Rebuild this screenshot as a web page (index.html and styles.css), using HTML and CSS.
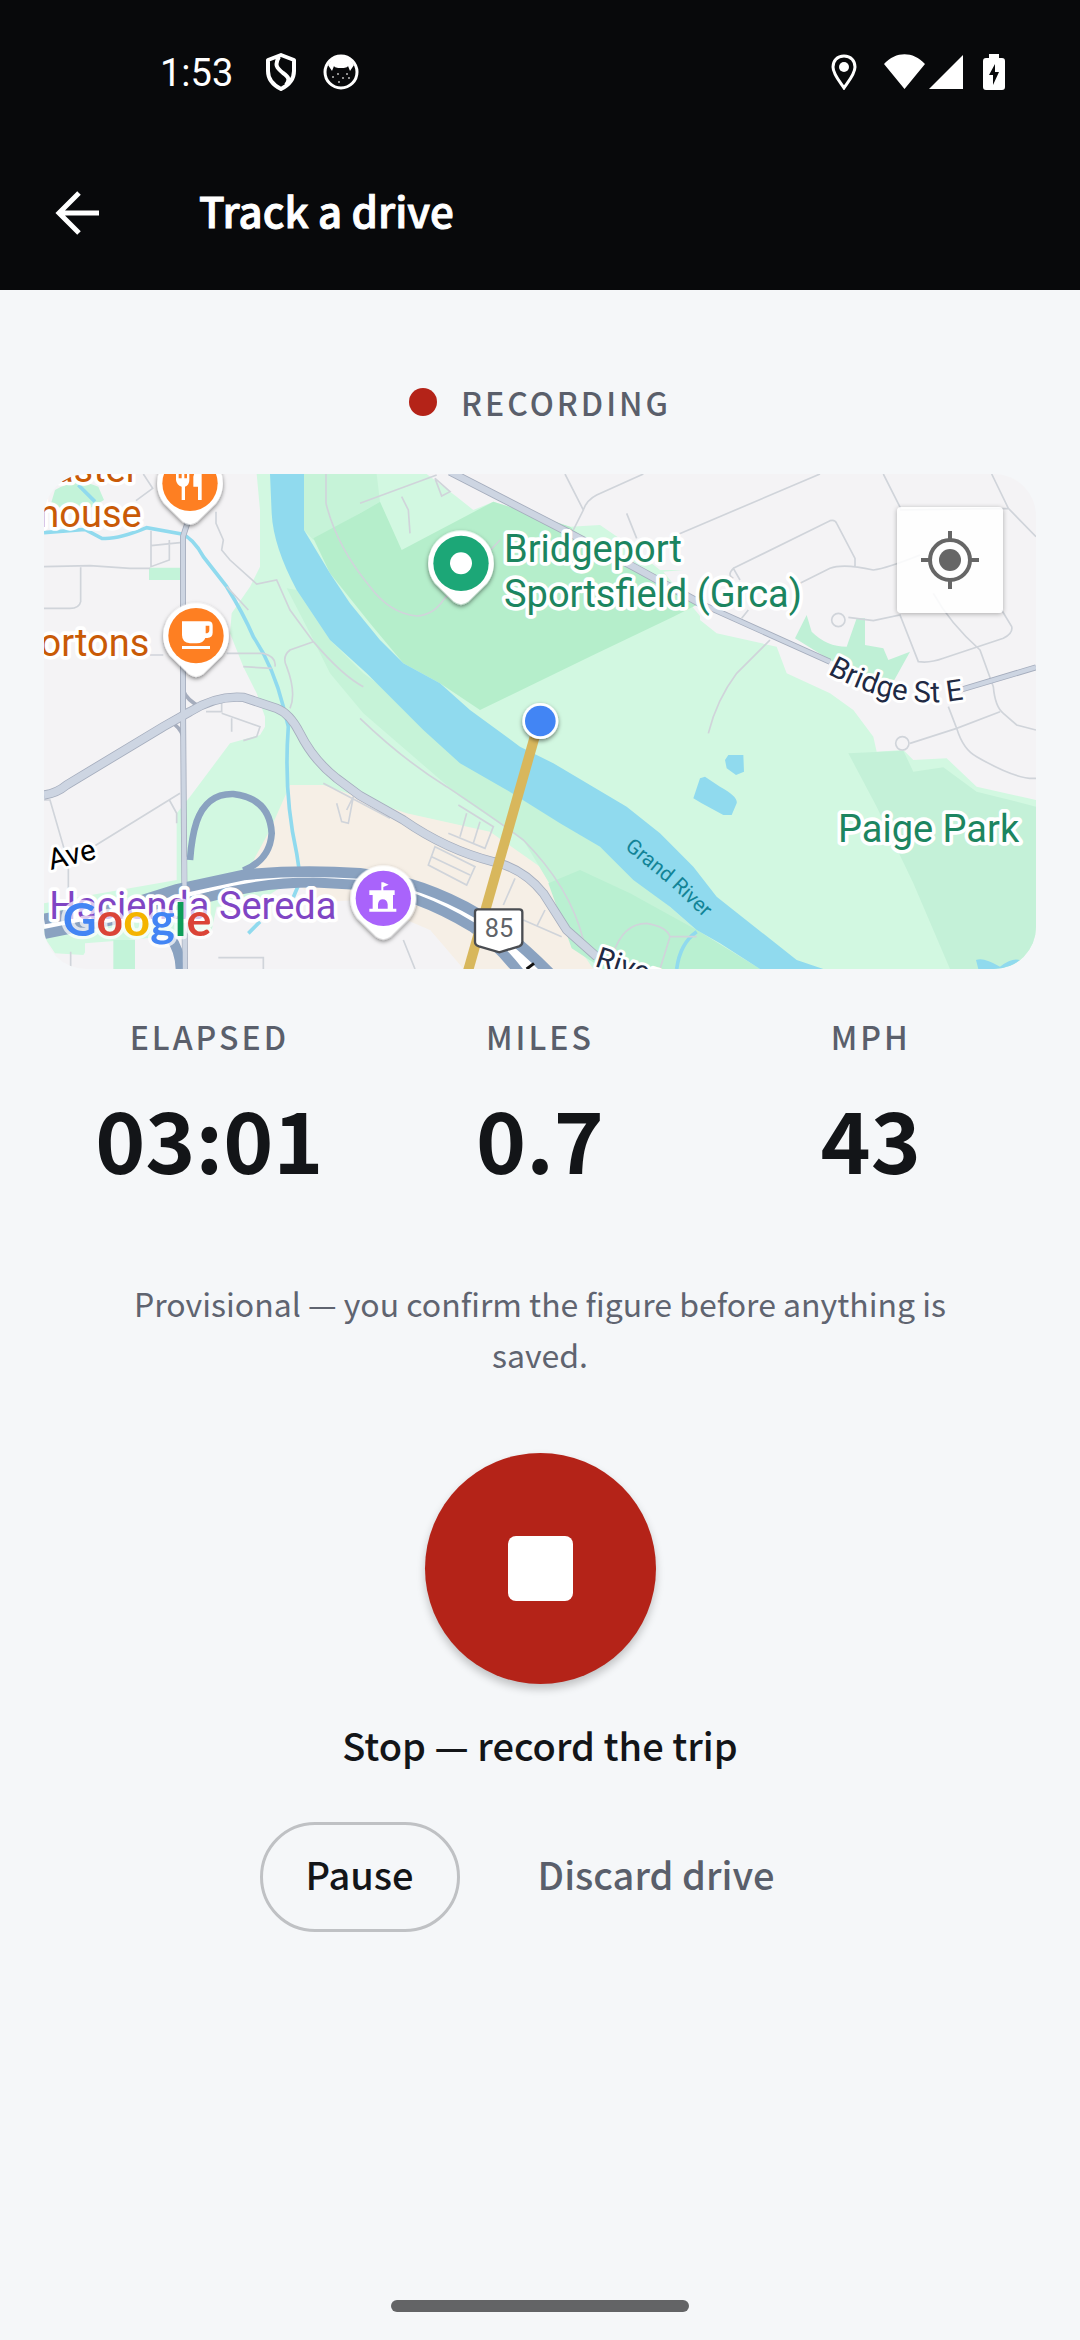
FILE: index.html
```html
<!DOCTYPE html>
<html lang="en">
<head>
<meta charset="utf-8">
<meta name="viewport" content="width=device-width, initial-scale=1">
<title>Track a drive</title>
<link rel="stylesheet" href="styles.css">
</head>
<body>
<header class="top">
  <div class="status">
    <div class="status-group">
      <span class="clock">1:53</span>
      <svg class="icon-shield" viewBox="0 0 32 38" aria-hidden="true"><path d="M16 2 L29 7 V18 C29 26 24 32 16 36 C8 32 3 26 3 18 V7 Z M14 4 C9 12 12 15 18 20 C24 24 25 27 21 32" fill="none" stroke="#fff" stroke-width="4" stroke-linejoin="round"/></svg>
      <svg class="icon-cat" viewBox="0 0 36 36" aria-hidden="true"><circle cx="18" cy="18" r="16" fill="none" stroke="#fff" stroke-width="3"/><path d="M5 11 C9 4 14 2 18 2 C22 2 27 4 31 11 L27 17 L25 12 C24 14 20 14 18 14 C16 14 12 14 11 12 L9 17 Z" fill="#fff"/><g fill="#bbb"><circle cx="10" cy="23" r="1"/><circle cx="20" cy="24" r="1"/><circle cx="15" cy="20" r="1"/><circle cx="24" cy="20" r="1"/><circle cx="16" cy="28" r="1"/><circle cx="26" cy="24" r="1"/></g></svg>
    </div>
    <div class="status-group status-right">
      <svg class="icon-place" viewBox="0 0 26 36" aria-hidden="true"><path d="M13 2 C6 2 2 7 2 13 C2 20 9 28 13 34 C17 28 24 20 24 13 C24 7 20 2 13 2 Z" fill="none" stroke="#fff" stroke-width="3"/><circle cx="13" cy="13" r="5" fill="#fff"/></svg>
      <svg class="icon-signal" viewBox="0 0 80 36" aria-hidden="true"><path d="M0 10 C12 -3 29 -3 41 10 L20.500 35 Z M79 1 V35 H45 Z" fill="#fff"/></svg>
      <svg class="icon-battery" viewBox="0 0 22 36" aria-hidden="true"><path fill="#fff" d="M6 0 H16 V4 H19 Q22 4 22 7 V33 Q22 36 19 36 H3 Q0 36 0 33 V7 Q0 4 3 4 H6 Z"/><path d="M12 10 L6 21 H10 V31 L16 18 H12 Z" fill="#08090b"/></svg>
    </div>
  </div>
  <div class="appbar">
    <button class="back" type="button" aria-label="Back"><svg viewBox="0 0 44 44" aria-hidden="true"><path d="M24 2 L4 22 L24 42 M4 22 H44" fill="none" stroke="#fff" stroke-width="5"/></svg></button>
    <h1 class="title">Track a drive</h1>
  </div>
</header>

<main class="content">
  <p class="recording label"><span class="dot"></span>Recording</p>

  <section class="map" aria-label="Map">
    <svg class="map-art" viewBox="42 42 2976 1485" preserveAspectRatio="xMidYMid slice" role="img" aria-label="Map of the drive">
      <defs>
        <path id="pin" d="M0 -98 A98 98 0 0 1 78 60 L22 115 Q0 132 -22 115 L-78 60 A98 98 0 0 1 0 -98 Z"/>
        <path id="bridge-line" d="M2392 640 Q2620 770 2850 706"/>
        <path id="river-line" d="M1783 1165 L1920 1276 L2060 1410"/>
        <filter id="pin-shadow" x="-30%" y="-30%" width="160%" height="160%"><feDropShadow dx="0" dy="6" stdDeviation="7" flood-color="#000" flood-opacity=".5"/></filter>
      </defs>
      <rect x="42" y="42" width="2976" height="1485" fill="#f4f3f5"/>

      <!-- parks and built-up areas -->
      <path fill="#d2f8e1" d="M680 42 L690 150 V320 L660 380 L605 460 L600 520 L640 620 L680 700 L705 770 L705 800 L690 825 L600 850 L480 1010 L440 1060 V1260 L42 1330 V1430 L75 1480 L160 1485 L180 1455 L560 1410 L800 1250 L1700 1527 H3018 V1020 L2840 980 L2750 895 L2650 900 L2620 870 L2540 875 L2530 830 L2470 750 L2400 700 L2270 640 L2240 560 L2060 520 L2010 480 L2010 330 H1890 L1790 250 L1710 195 L1620 200 L1390 125 L1330 150 L1280 110 L1190 42 Z"/>
      <path fill="#f4f3f5" d="M1900 335 L2020 325 V480 Z"/>
      <path fill="#f6efe6" d="M780 975 L880 975 L1130 1060 L1380 1115 L1530 1220 L1570 1290 L1630 1440 L1690 1527 H1300 L1200 1410 L1000 1435 L800 1270 L660 1220 L720 1110 Z"/>
      <path fill="#f4f3f5" d="M560 1340 L990 1320 L1200 1410 L1300 1527 H520 Z M165 1450 L420 1430 V1527 H165 Z"/>
      <path fill="#c3f3d9" d="M250 1440 H315 V1527 H250 Z M75 90 Q140 50 205 80 L222 120 L170 150 L60 140 Z M357 323 H452 V360 H357 Z"/>
      <path fill="#c6f3d8" d="M822 42 H1040 L1050 125 L850 240 L822 210 Z M770 385 L800 390 L900 540 L1000 640 L1180 770 L1430 990 L1710 1160 L2000 1410 L2190 1527 H1720 L1630 1440 L1570 1290 L1480 1140 L1290 1010 L1000 760 L900 640 L840 520 Z"/>
      <path fill="#b9f0d1" d="M1555 1270 L1650 1230 L1800 1300 L2000 1410 L2190 1527 H1720 L1625 1465 Z"/>
      <path fill="#b5eecb" d="M1390 125 L1115 270 L1050 125 L990 160 L850 235 L900 340 L1020 490 L1120 610 L1230 670 L1350 750 L1690 585 L1930 470 L2010 430 L1890 360 L1710 280 L1620 200 Z"/>
      <path fill="#c4f1d8" d="M2455 880 L2620 872 L2650 935 L2740 922 L2840 995 L3018 1040 V1527 H2760 L2650 1270 L2540 1040 Z"/>
      <path fill="#bff0d6" d="M2295 535 L2330 465 L2345 515 Q2390 560 2450 560 L2480 475 L2505 475 L2505 555 L2560 565 L2575 600 L2640 575 L2590 665 L2500 650 L2400 600 Z"/>

      <!-- water -->
      <path fill="#90daee" d="M720 42 L725 160 Q730 260 800 390 L900 540 L1010 640 L1180 810 L1290 910 L1430 990 L1590 1090 L1710 1160 L1810 1260 L1920 1340 L2000 1410 L2070 1450 L2190 1527 H2380 L2300 1500 L2060 1310 L1990 1220 L1890 1120 L1790 1040 L1570 910 L1470 860 L1320 750 L1230 670 L1120 610 L1050 540 L960 430 L900 340 L822 210 V42 Z M2085 900 L2095 885 H2140 L2142 935 L2118 945 L2090 925 Z M1990 1015 L2010 955 L2025 950 L2070 980 Q2125 1010 2120 1030 L2105 1065 H2080 L2015 1030 Z M2838 1500 Q2860 1490 2910 1520 Q2950 1490 2972 1502 L2930 1527 H2845 Z"/>
      <g fill="none" stroke="#90daee" stroke-width="11">
        <path d="M145 75 L195 125 M42 218 L165 208 L215 235 Q260 240 350 203 L455 222 Q490 235 520 290 L590 380 Q640 460 670 530 Q730 620 760 740 L775 800 Q760 1000 800 1180 L812 1260 L790 1312 M690 1385 L655 1420"/>
        <path d="M2000 1415 Q1950 1450 1940 1527"/>
      </g>

      <!-- minor streets -->
      <g fill="none" stroke="#d0d4da" stroke-width="5">
        <path d="M42 320 L180 317 L300 325 H360 M152 322 V425 Q148 445 120 445 H42 M363 212 V320 L418 300 V240 M363 257 L450 248 M340 42 L368 85 L318 122"/>
        <path d="M558 155 V190 L580 240 L575 270 L600 300 L680 372 L740 360 L780 450 L850 545 Q940 650 1000 680 M590 380 L655 450 M850 545 L780 570 Q755 590 770 620 Q800 700 780 745 M360 585 H400 M590 580 H700 Q740 590 735 620 M640 620 L725 625"/>
        <path d="M888 42 V130 Q920 260 1020 380 Q1080 460 1160 468 Q1210 465 1240 420 L1410 240 M1115 110 L1135 150 L1140 220 M990 130 L1220 45 M1215 55 L1260 95 L1235 108 Z"/>
        <path d="M42 1020 H60 L115 1210 V1300 M190 1160 L450 1000 M418 1020 L440 1060 V1090 M528 755 L575 755 V730 M575 760 L690 800 L680 830 L640 842 M605 775 V815 M122 1475 V1527 M565 1493 H700 V1527"/>
        <path d="M880 970 L1080 1075 M920 1030 L935 1085 L955 1090 L970 1010 L950 1050 M1215 1160 L1335 1220 L1310 1275 L1195 1215 Z M1205 1190 L1320 1245 M1285 1035 L1390 1100 L1365 1165 L1255 1120 M1310 1060 L1290 1130 M1350 1085 L1330 1150 M1455 1255 L1420 1335 M1480 1380 L1595 1430 M1545 1350 L1520 1400 M1120 1440 L1155 1527 M990 775 Q1120 900 1250 980 Q1400 1080 1480 1140 Q1620 1280 1660 1440"/>
        <path d="M1750 1480 Q1780 1390 1850 1390 Q1910 1400 1920 1430 L1890 1527 M1920 1430 L2000 1430"/>
        <path d="M1605 42 L1660 150 L1630 210 M1660 150 Q1670 120 1700 105 L1840 42 M1790 160 L1820 235 M1940 225 L2370 42 M2560 42 L2612 145 M2885 42 L2935 145 L3018 230 M2610 150 L2935 145"/>
        <path d="M2110 325 L2400 182 Q2415 178 2420 190 L2475 295 V322 M2130 360 L2110 325 Q2090 345 2110 355 M2310 370 L2400 325 Q2440 310 2530 330 Q2570 325 2670 285 M2455 472 L2530 482 L2610 465 L2665 605 Q2700 610 2740 595 L2920 535 Q2950 520 2945 500 L2915 450 M2710 400 Q2760 490 2850 570 L2890 680 Q2895 740 2920 760 L2960 795 L3018 810 M2755 740 L2780 805 L2910 755 M2780 805 Q2800 870 2840 890 Q2960 960 3018 955 M2640 850 L2780 805 M2135 475 L2155 450 M2220 540 L2120 640 Q2060 720 2035 820"/>
      </g>
      <g fill="#f4f3f5" stroke="#d0d4da" stroke-width="5"><circle cx="2425" cy="480" r="20"/><circle cx="2617" cy="850" r="20"/></g>

      <!-- arterial roads: casing, then surface -->
      <g fill="none" stroke="#a5adbd">
        <path stroke-width="18" d="M472 190 L459 230 V740 L465 1527"/>
        <path stroke-width="28" d="M42 1005 Q80 1000 110 975 L400 800 L480 755 Q560 705 640 712 L740 745 Q780 760 810 820 Q850 900 920 955 L990 1007 L1120 1080 Q1250 1170 1390 1205 Q1480 1225 1540 1300 L1610 1410 L1700 1490"/>
        <path stroke-width="24" d="M1260 35 L1610 215 L1810 320 L2010 430"/>
        <path stroke-width="18" d="M2010 430 L2400 605 M2780 693 L3018 622"/>
        <path stroke-width="11" d="M459 690 Q470 720 510 740 M459 830 Q450 800 420 785"/>
      </g>
      <g fill="none" stroke="#cdd5e2">
        <path stroke-width="13" d="M472 190 L459 230 V740 L465 1527"/>
        <path stroke-width="23" d="M42 1005 Q80 1000 110 975 L400 800 L480 755 Q560 705 640 712 L740 745 Q780 760 810 820 Q850 900 920 955 L990 1007 L1120 1080 Q1250 1170 1390 1205 Q1480 1225 1540 1300 L1610 1410 L1700 1490"/>
        <path stroke-width="19" d="M1260 35 L1610 215 L1810 320 L2010 430"/>
        <path stroke-width="13" d="M2010 430 L2400 605 M2780 693 L3018 622"/>
      </g>

      <!-- highway -->
      <g fill="none">
        <path stroke="#fff" stroke-width="46" d="M42 1400 L300 1350 L600 1270 Q820 1240 990 1257 Q1180 1280 1340 1380 Q1430 1440 1520 1540"/>
        <g stroke="#8aa2c0">
          <path stroke-width="20" d="M480 1200 Q485 1130 500 1085 Q530 1000 610 1002 Q720 1015 725 1120 Q720 1200 640 1232"/>
          <path stroke-width="32" d="M42 1377 L300 1332 L440 1288 L640 1245 Q800 1228 990 1240 Q1180 1265 1345 1362 Q1440 1420 1560 1540"/>
          <path stroke-width="30" d="M42 1422 L300 1370 L540 1310 Q700 1265 870 1268 L990 1275 Q1160 1300 1325 1400 Q1400 1450 1470 1540 M420 1430 Q450 1470 452 1527"/>
        </g>
        <path stroke="#cdd5e2" stroke-width="13" d="M463 1190 L465 1527"/>
      </g>

      <!-- driven route and current position -->
      <path d="M1517 820 L1312 1540" fill="none" stroke="#d8b75c" stroke-width="30"/>
      <g filter="url(#pin-shadow)"><circle cx="1531" cy="783" r="54" fill="#fff"/></g>
      <circle cx="1531" cy="783" r="46" fill="#4285f4"/>
      <path d="M1343 1348 H1468 Q1477 1348 1477 1357 V1445 Q1477 1455 1467 1459 L1408 1477 L1347 1459 Q1335 1455 1335 1445 V1357 Q1335 1348 1343 1348 Z" fill="#fff" stroke="#4a4d52" stroke-width="7"/>
      <text class="map-shield" x="1407" y="1430" text-anchor="middle">85</text>

      <!-- places -->
      <g class="map-place">
        <g class="is-food">
          <text x="326" y="66" text-anchor="end">aster</text>
          <text x="335" y="200" text-anchor="end">house</text>
          <text x="358" y="588" text-anchor="end">ortons</text>
        </g>
        <g class="is-park">
          <text x="1422" y="305">Bridgeport</text>
          <text x="1422" y="440">Sportsfield (Grca)</text>
          <text x="2424" y="1145">Paige Park</text>
        </g>
        <text class="is-sight" x="58" y="1378">Hacienda Sereda</text>
      </g>
      <g class="map-road">
        <text class="is-ave" transform="translate(62 1230) rotate(-14)">Ave</text>
        <text><textPath href="#bridge-line">Bridge St E</textPath></text>
        <text transform="translate(1692 1518) rotate(18)">River</text>
      </g>
      <path d="M1490 1527 L1512 1510" stroke="#111" stroke-width="9"/>
      <text class="map-river"><textPath href="#river-line">Grand River</textPath></text>

      <g filter="url(#pin-shadow)" fill="#fff">
        <use href="#pin" x="480" y="70"/><use href="#pin" x="498" y="527"/><use href="#pin" x="1293" y="310"/><use href="#pin" x="1060" y="1315"/>
      </g>
      <g fill="#fe7f22"><circle cx="480" cy="70" r="83"/><circle cx="498" cy="527" r="83"/></g>
      <circle cx="1293" cy="310" r="83" fill="#1ca777"/><circle cx="1293" cy="310" r="33" fill="#fff"/>
      <circle cx="1060" cy="1315" r="83" fill="#a963fb"/>
      <g fill="#fff">
        <path d="M438 30 H446 V55 H455 V30 H463 V55 H471 V30 H478 V60 Q478 76 465 80 V120 H455 V80 Q440 76 438 60 Z M515 30 V120 H504 V80 H490 V50 Q492 32 515 30 Z"/>
        <path fill-rule="evenodd" d="M456 484 H535 Q548 484 548 497 V518 Q548 532 532 534 H526 Q520 550 500 550 H480 Q456 548 456 525 Z M527 497 V520 Q538 520 538 510 V497 Z M456 558 H540 V567 H456 Z"/>
        <path d="M1054 1267 H1060 L1076 1274 L1060 1281 V1291 H1094 V1305 H1089 V1346 H1099 V1355 H1018 V1346 H1028 V1305 H1018 V1291 H1054 Z M1044 1346 H1073 V1333 Q1071 1318 1058 1318 Q1046 1318 1044 1333 Z" fill-rule="evenodd"/>
      </g>
      <text class="map-logo" x="98" y="1429"><tspan fill="#4285f4">G</tspan><tspan fill="#db4437">o</tspan><tspan fill="#f4b400">o</tspan><tspan fill="#4285f4">g</tspan><tspan fill="#0f9d58">l</tspan><tspan fill="#db4437">e</tspan></text>
    </svg>
    <button class="locate" type="button" aria-label="My location"><svg viewBox="0 0 60 60" aria-hidden="true"><circle cx="30" cy="30" r="11" fill="#666"/><g fill="none" stroke="#666" stroke-width="4"><circle cx="30" cy="30" r="20"/><path d="M30 1 V10 M30 50 V59 M1 30 H10 M50 30 H59"/></g></svg></button>
  </section>

  <dl class="stats">
    <div class="stat"><dt class="label">Elapsed</dt><dd class="value">03:01</dd></div>
    <div class="stat"><dt class="label">Miles</dt><dd class="value">0.7</dd></div>
    <div class="stat"><dt class="label">MPH</dt><dd class="value">43</dd></div>
  </dl>

  <p class="note">Provisional — you confirm the figure before anything is saved.</p>

  <button class="stop" id="stop" type="button" aria-labelledby="stop-label"><span class="stop-square"></span></button>
  <p class="stop-label" id="stop-label">Stop — record the trip</p>

  <div class="actions">
    <button class="action pause" type="button">Pause</button>
    <button class="action discard" type="button">Discard drive</button>
  </div>
</main>

<footer class="nav"><span class="handle"></span></footer>
</body>
</html>
```
FILE: styles.css
```css
* { box-sizing: border-box; margin: 0; padding: 0; }

body {
  min-height: 100vh;
  display: flex;
  flex-direction: column;
  background: #f5f7f9;
  color: #131518;
  font-family: "Noto Sans CJK SC", "Noto Sans", sans-serif;
}

button { border: 0; background: none; color: inherit; font: inherit; }
svg { display: block; }

.title, .label, .stop-label, .action { font-weight: 500; }

/* Header */
.top { background: #08090b; color: #fff; }
.status {
  height: 136px;
  padding: 7px 75px 0 160px;
  display: flex;
  align-items: center;
  justify-content: space-between;
}
.status-group { display: flex; align-items: center; }
.clock { font: 38px/44px Roboto, sans-serif; padding-top: 2px; margin-right: 32px; }
.icon-shield { width: 32px; height: 38px; margin-right: 26px; }
.icon-cat { width: 36px; height: 36px; }
.icon-place { width: 26px; height: 36px; margin-right: 27px; }
.icon-signal { width: 80px; height: 36px; margin-right: 19px; }
.icon-battery { width: 22px; height: 36px; }

.appbar {
  height: 154px;
  padding: 0 43px;
  display: flex;
  align-items: center;
  gap: 88px;
}
.back { padding: 12px; }
.back svg { width: 44px; height: 44px; }
.title {
  padding-bottom: 6px;
  font-size: 42px;
  line-height: 60px;
  -webkit-text-stroke: 1px currentColor;
}

/* Content */
.content {
  flex: 1;
  padding: 90px 44px 0;
  display: flex;
  flex-direction: column;
  align-items: center;
}
.label {
  font-size: 32px;
  line-height: 44px;
  letter-spacing: 3px;
  text-transform: uppercase;
  color: #5a5f6b;
}
.recording { display: flex; align-items: center; gap: 24px; }
.dot { width: 28px; height: 28px; border-radius: 50%; background: #b42318; }

.map {
  position: relative;
  align-self: stretch;
  height: 495px;
  margin-top: 50px;
  border-radius: 42px;
  overflow: hidden;
}
.map-art { width: 100%; height: 100%; font-family: Roboto, sans-serif; }
.map-art text { paint-order: stroke; stroke-linejoin: round; }
.map-place { font-size: 114px; stroke: #fff; stroke-width: 22px; }
.is-food { fill: #c95a06; }
.is-park { fill: #1c8560; }
.is-sight { fill: #8045c4; }
.map-road { font-size: 88px; fill: #1f2a44; stroke: #fff; stroke-width: 18px; }
.is-ave { fill: #000; }
.map-river { font-size: 62px; fill: #128497; }
.map-shield { font-size: 76px; fill: #5f6368; }
.map-logo {
  font: 700 140px Lato, sans-serif;
  stroke: #fff;
  stroke-opacity: .7;
  stroke-width: 20px;
}

.locate {
  position: absolute;
  top: 33px;
  right: 33px;
  width: 106px;
  height: 106px;
  display: grid;
  place-items: center;
  border-radius: 4px;
  background: rgba(255, 255, 255, .85);
  box-shadow: 0 1px 5px rgba(0, 0, 0, .3);
}
.locate svg { width: 60px; height: 60px; }

.stats {
  align-self: stretch;
  display: grid;
  grid-template-columns: repeat(3, 1fr);
  margin-top: 45px;
  text-align: center;
}
.stat { display: grid; gap: 29px; }
.value { font-size: 85px; line-height: 100px; font-weight: 700; }

.note {
  margin-top: 91px;
  padding: 0 48px;
  font-size: 32px;
  line-height: 51px;
  text-align: center;
  color: #5f6470;
}

.stop {
  width: 231px;
  height: 231px;
  margin-top: 73px;
  display: grid;
  place-items: center;
  border-radius: 50%;
  background: #b42318;
  box-shadow: 0 5px 8px rgba(0, 0, 0, .22);
}
.stop-square { width: 65px; height: 65px; border-radius: 8px; background: #fff; }
.stop-label { margin-top: 35px; font-size: 38px; line-height: 52px; }

.actions { display: flex; gap: 32px; margin-top: 51px; }
.action {
  height: 110px;
  padding: 0 43px 6px;
  border: 3px solid transparent;
  border-radius: 55px;
  font-size: 38px;
  line-height: 52px;
}
.pause { border-color: #bfc1c4; }
.discard { color: #5a5f6b; }

.nav { display: flex; justify-content: center; padding-bottom: 28px; }
.handle { width: 298px; height: 12px; border-radius: 6px; background: #636466; }
```
